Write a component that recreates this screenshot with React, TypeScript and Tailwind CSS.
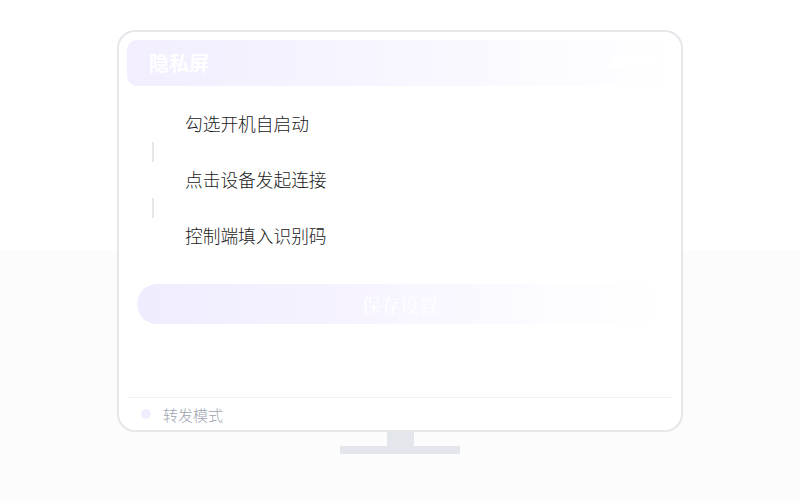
import React from "react";

const cjk = { fontFamily: '"Noto Sans CJK SC", "Noto Sans", sans-serif' };

export default function App() {
  const steps = ["勾选开机自启动", "点击设备发起连接", "控制端填入识别码"];
  return (
    <div
      className="w-[800px] h-[500px] flex flex-col items-center bg-[linear-gradient(to_bottom,#ffffff_0%,#ffffff_50%,#fcfcfd_50%,#fcfcfd_100%)]"
      style={cjk}
    >
      <div className="mt-[30px] w-[566px] h-[402px] rounded-[18px] border-2 border-[#e5e7eb] bg-white flex flex-col px-[8px] pt-[8px]">
        <div className="h-[46px] rounded-[10px] bg-[linear-gradient(to_right,#f2eeff_0%,#f7f5ff_45%,#ffffff_100%)] flex items-center justify-between pl-[22px] pr-[18px]">
          <span className="text-[20px] font-bold text-white leading-none">隐私屏</span>
          <div className="w-[46px] h-[12px] rounded-full bg-white/70" />
        </div>

        <div className="mt-[24px] flex flex-col">
          {steps.map((s, i) => (
            <div key={s} className="flex flex-col">
              <div className="h-[28px] flex items-center pl-[58px] text-[17.7px] font-light text-[#1a1a1a] leading-none">
                {s}
              </div>
              {i < steps.length - 1 && (
                <div className="ml-[25px] my-[4px] h-[20px] w-[2px] bg-[#e5e7eb]" />
              )}
            </div>
          ))}
        </div>

        <div className="mt-[34px] mx-[10px] h-[40px] rounded-full bg-[linear-gradient(to_right,#f0ecff_0%,#f6f3ff_40%,#fcfbff_75%,#ffffff_100%)] flex items-center justify-center">
          <span
            className="text-[19px] text-white leading-none"
            style={{ fontFamily: '"Noto Serif CJK SC", "Liberation Serif", serif' }}
          >
            保存设置
          </span>
        </div>

        <div className="mt-auto h-[33px] border-t border-[#eef0f3] flex items-center">
          <div className="ml-[14px] w-[10px] h-[10px] rounded-full bg-[#f0edff]" />
          <span className="ml-[12px] text-[15px] font-light text-[#9ca3af] leading-none">转发模式</span>
        </div>
      </div>
      <div className="w-[27px] h-[14px] bg-[#e3e6ea]" />
      <div className="w-[120px] h-[8px] bg-[#e3e6ea]" />
    </div>
  );
}
